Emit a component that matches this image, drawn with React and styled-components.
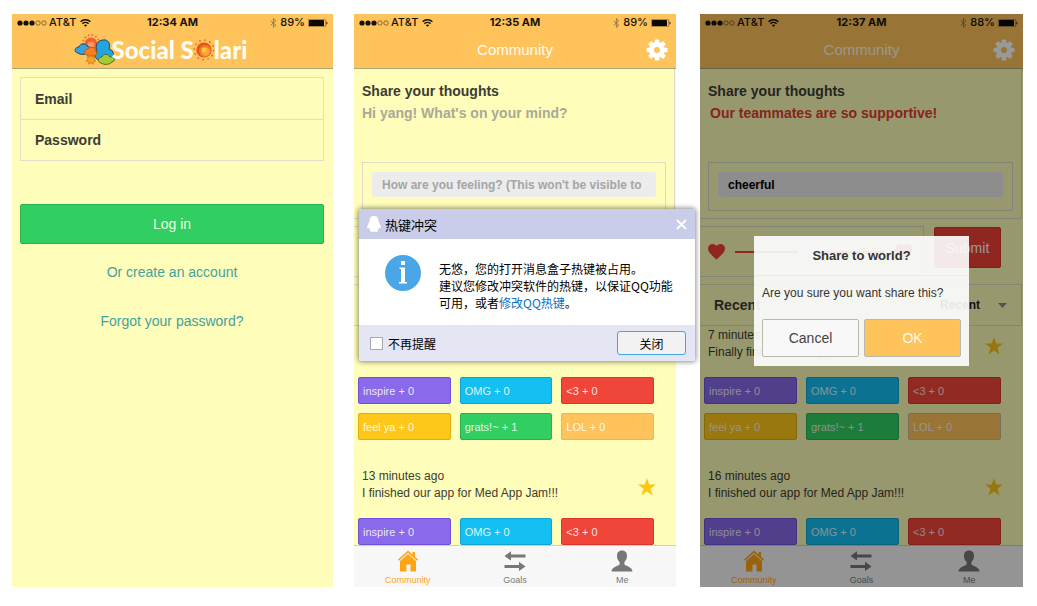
import React, { useId } from "react";
import styled, { createGlobalStyle } from "styled-components";

const GlobalStyle = createGlobalStyle`
  *, *::before, *::after { box-sizing: border-box; }
  body { margin: 0; background: #fff; font-family: "Liberation Sans", Arial, sans-serif; }
  button, input, select, textarea { font: inherit; margin: 0; }
`;

const Page = styled.main`
  display: grid;
  grid-template-columns: minmax(0, 321fr) 21px minmax(0, 322fr) 24px minmax(0, 323fr);
  padding: 14px 14px 19px 12px;
`;

const Phone = styled.section`
  position: relative;
  grid-column: ${(p) => p.$column};
  grid-row: 1;
  display: flex;
  flex-direction: column;
  min-width: 0;
  background: #fefdb9;
  color: #3c3c34;
`;

/* header */
const Header = styled.header`
  background: #fec35a;
  border-bottom: 1px solid #aaa679;
`;

const StatusBar = styled.div`
  display: grid;
  grid-template-columns: 1fr auto 1fr;
  align-items: center;
  height: 17px;
  padding: 0 5px;
  font: 500 11px/17px Inter, sans-serif;
  color: #16110a;
`;

const StatusTime = styled.span`
  font-weight: 700;
`;

const StatusGroup = styled.div`
  display: flex;
  align-items: center;
  gap: ${(p) => (p.$end ? 3 : 2)}px;
  justify-content: ${(p) => (p.$end ? "flex-end" : "flex-start")};
`;

const TitleBar = styled.div`
  display: grid;
  grid-template-columns: 38px 1fr 38px;
  align-items: center;
  height: 37px;
`;

const Title = styled.h1`
  margin: 0;
  font-size: 15px;
  line-height: 20px;
  font-weight: 400;
  text-align: center;
  color: #fffbee;
`;

const IconButton = styled.button`
  display: flex;
  justify-content: center;
  padding: 0;
  border: 0;
  background: none;
  color: #fff;
`;

const Brand = styled.h1`
  display: flex;
  align-items: center;
  justify-content: center;
  height: 37px;
  margin: 0;
  padding-right: 24px;
  font: 900 24px/30px Lato, sans-serif;
  color: #fffdf2;
`;

/* login */
const LoginForm = styled.form`
  display: flex;
  flex-direction: column;
  padding: 8px 9px 0 8px;
`;

const FieldGroup = styled.div`
  display: flex;
  flex-direction: column;
  border: 1px solid #e2dfc9;
`;

const Field = styled.input`
  height: 41px;
  padding: 0 14px;
  border: 0;
  background: transparent;
  font-size: 14px;
  font-weight: 700;
  outline: none;
  & + & { border-top: 1px solid #e2dfc9; }
  &::placeholder { color: #3c3c34; opacity: 1; }
`;

const LoginButton = styled.button`
  height: 40px;
  margin-top: 43px;
  border: 1px solid #2bb457;
  border-radius: 2px;
  background: #31cf61;
  color: #e9fbe4;
  font-size: 14px;
`;

const LoginLinks = styled.nav`
  display: flex;
  flex-direction: column;
  align-items: center;
  gap: 29px;
  padding-top: 18px;
  a { font-size: 14px; line-height: 20px; color: #43a2a0; text-decoration: none; }
`;

/* community */
const Panel = styled.div`
  border: 1px solid #dddac8;
  border-left: 0;
`;

const Composer = styled(Panel)`
  display: flex;
  flex-direction: column;
  margin-right: 1px;
  padding: 11px 8px 7px;
  border-top: 0;
`;

const ComposerLabel = styled.label`
  font-size: 14px;
  line-height: 22px;
  font-weight: 700;
`;

const Thoughts = styled.textarea`
  height: 60px;
  padding: 0;
  border: 0;
  background: transparent;
  resize: none;
  outline: none;
  font-size: 14px;
  line-height: 22px;
  font-weight: 700;
  text-indent: 2px;
  color: #e23b34;
  &::placeholder { color: #a9a998; text-indent: 0; opacity: 1; }
`;

const FeelingBox = styled.div`
  display: flex;
  padding: 9px 9px 13px;
  border: 1px solid #dddac8;
`;

const Feeling = styled.input`
  flex: 1;
  min-width: 0;
  height: 25px;
  padding: 0 10px;
  border: 0;
  border-radius: 3px;
  background: #ececec;
  color: #000;
  font-size: 12px;
  font-weight: 700;
  outline: none;
  &::placeholder { color: #a5a5a5; opacity: 1; }
`;

const ShareRow = styled.div`
  display: flex;
  gap: 10px;
  margin-top: 7px;
  padding-right: 22px;
`;

const MoodPanel = styled(Panel)`
  display: flex;
  flex: 1;
  align-items: center;
  gap: 10px;
  min-width: 0;
  height: 51px;
  padding: 0 11px 0 8px;
`;

const MoodRange = styled.input`
  flex: 1;
  min-width: 0;
  height: 26px;
  appearance: none;
  background: transparent;
  &::-webkit-slider-runnable-track { height: 2px; background: #ee4136; }
  &::-webkit-slider-thumb {
    appearance: none;
    width: 24px;
    height: 24px;
    margin-top: -11px;
    border-radius: 50%;
    background: #fff;
  }
`;

const SubmitButton = styled.button`
  width: 67px;
  height: 41px;
  margin-top: 1px;
  padding: 0;
  border: 1px solid #d9352c;
  border-radius: 2px;
  background: #ee4136;
  color: #fff;
  font-size: 14px;
`;

const SortPanel = styled(Panel)`
  display: flex;
  align-items: center;
  justify-content: space-between;
  height: 42px;
  margin: 7px 1px 0 0;
  padding: 0 14px;
`;

const SortLabel = styled.label`
  font-size: 14px;
  font-weight: 700;
`;

const SortControl = styled.div`
  display: flex;
  align-items: center;
  gap: 14px;
`;

const SortSelect = styled.select`
  appearance: none;
  width: 44px;
  padding: 0;
  border: 0;
  background: transparent;
  color: #222;
  font-size: 12px;
  font-weight: 700;
`;

const PostItem = styled.article`
  padding: 1px 22px ${(p) => (p.$last ? 0 : 27)}px 4px;
`;

const PostTop = styled.div`
  display: flex;
  align-items: center;
  justify-content: space-between;
  height: 34px;
  margin-bottom: 16px;
  padding-left: 4px;
`;

const PostText = styled.p`
  margin: 0;
  font-size: 12px;
  line-height: 17px;
  white-space: nowrap;
`;

const StarSlot = styled.span`
  display: flex;
  padding-top: 4px;
  margin: 0 -2px 0 auto;
`;

const Reactions = styled.div`
  display: grid;
  grid-template-columns: repeat(3, 1fr);
  gap: 9px;
`;

const Reaction = styled.button`
  height: 27px;
  padding: 0 4px;
  border: 1px solid ${(p) => p.$edge};
  border-radius: 2px;
  background: ${(p) => p.$fill};
  color: rgba(255, 255, 255, 0.86);
  font-size: 11px;
  text-align: left;
`;

const TabBar = styled.nav`
  display: grid;
  grid-template-columns: repeat(3, 1fr);
  height: 42px;
  margin-top: auto;
  border-top: 1px solid #cfcfc4;
  background: #f7f7f7;
`;

const Tab = styled.a`
  display: flex;
  flex-direction: column;
  align-items: center;
  gap: 2px;
  padding-top: 4px;
  font-size: 9px;
  line-height: 12px;
  text-decoration: none;
  color: ${(p) => (p.$active ? "#fea516" : "#777")};
`;

/* share confirmation */
const Shade = styled.div`
  position: absolute;
  inset: 0;
  display: flex;
  align-items: center;
  justify-content: center;
  background: rgba(0, 0, 0, 0.4);
`;

const Confirm = styled.div`
  width: 215px;
  background: rgba(255, 255, 255, 0.9);
  color: #333;
`;

const ConfirmTitle = styled.h2`
  margin: 0;
  border-bottom: 1px solid #ecece8;
  font-size: 13px;
  line-height: 39px;
  font-weight: 700;
  text-align: center;
`;

const ConfirmText = styled.p`
  margin: 0;
  padding: 8px;
  font-size: 12px;
  line-height: 18px;
`;

const ConfirmActions = styled.div`
  display: grid;
  grid-template-columns: 1fr 1fr;
  gap: 5px;
  padding: 9px 8px 9px;
`;

const ConfirmButton = styled.button`
  height: 38px;
  border: 1px solid #b9b9b4;
  border-radius: 2px;
  background: ${(p) => (p.$primary ? "#fec35a" : "#f8f8f8")};
  color: ${(p) => (p.$primary ? "#fffbee" : "#444")};
  font-size: 14px;
`;

/* hotkey window */
const Window = styled.div`
  position: absolute;
  top: 195px;
  left: 5px;
  right: -19px;
  border-radius: 3px;
  overflow: hidden;
  background: #fff;
  color: #000;
  font: 12px/17px "Noto Sans CJK SC", sans-serif;
  box-shadow: 0 0 5px 1px rgba(0, 0, 0, 0.45);
`;

const WindowTitle = styled.div`
  display: flex;
  align-items: center;
  height: 30px;
  padding: 0 8px 0 7px;
  background: #c9cde9;
  h2 { flex: 1; margin: 0 0 0 3px; font-size: 13px; font-weight: 400; }
`;

const WindowBody = styled.div`
  display: flex;
  gap: 18px;
  height: 86px;
  padding: 16px 20px 0 26px;
  p { margin: 5px 0 0; white-space: nowrap; }
  a { color: #0a70c4; text-decoration: none; }
`;

const WindowFooter = styled.div`
  display: flex;
  align-items: center;
  justify-content: space-between;
  height: 36px;
  padding: 0 9px 0 11px;
  background: #e4e6f4;
`;

const Remember = styled.label`
  display: flex;
  align-items: center;
  gap: 5px;
  input {
    appearance: none;
    width: 13px;
    height: 13px;
    border: 1px solid #a9a9ae;
    background: #fff;
  }
`;

const CloseButton = styled.button`
  width: 69px;
  height: 24px;
  padding: 0;
  border: 1px solid #45a5dc;
  border-radius: 3px;
  background: #f2f2f3;
  color: #000;
`;

/* drawings */
const SignalIcon = () => (
  <svg width="30" height="6" viewBox="0 0 30 6">
    {[3, 9, 15].map((x) => <circle key={x} cx={x} cy="3" r="2.600" fill="#16110a" />)}
    {[21, 27].map((x) => <circle key={x} cx={x} cy="3" r="2.200" fill="none" stroke="#59441f" strokeWidth=".7" />)}
  </svg>
);

const WifiIcon = () => (
  <svg width="11" height="8" viewBox="0 0 11 8" fill="none" stroke="#16110a" strokeWidth="1.4" style={{ marginLeft: 2 }}>
    <path d="M.6 2.7a7 7 0 0 1 9.800 0M2.400 4.700a4.500 4.500 0 0 1 6.200 0" />
    <path d="M5.500 7.800 3.900 6.200a2.300 2.300 0 0 1 3.200 0Z" fill="#16110a" stroke="none" />
  </svg>
);

const BluetoothIcon = () => (
  <svg width="7" height="10" viewBox="0 0 7 10" fill="none" stroke="#8d744a" strokeWidth=".9">
    <path d="m.8 2.800 5 4.400L3.400 9.400V.6l2.400 2.200-5 4.400" />
  </svg>
);

const BatteryIcon = () => (
  <svg width="20" height="8" viewBox="0 0 20 8">
    <rect x=".3" y=".3" width="17.400" height="7.400" rx="1.200" fill="none" stroke="#59441f" strokeWidth=".6" />
    <rect x="1" y="1" width="15" height="6" rx=".5" fill="#0c0905" />
    <path d="M18.500 2.500c1.300.3 1.300 2.700 0 3z" fill="#16110a" />
  </svg>
);

const GearIcon = () => (
  <svg width="22" height="22" viewBox="-11 -11 22 22" fill="currentColor">
    {[0, 45, 90, 135].map((a) => (
      <rect key={a} x="-2.300" y="-10.500" width="4.600" height="21" rx="1.200" transform={`rotate(${a})`} />
    ))}
    <circle r="7.900" />
    <circle r="3" fill="#fec35a" />
  </svg>
);

const CloudsIcon = () => (
  <svg width="42" height="31" viewBox="0 0 42 31" style={{ marginRight: -4 }}>
    <circle cx="17" cy="9" r="8" fill="none" stroke="#e8703a" strokeWidth="1.800" strokeDasharray="1.600 2.200" />
    <circle cx="17" cy="10" r="6.400" fill="#f2602f" />
    <circle cx="17" cy="11" r="3.400" fill="#f99a5d" />
    <g strokeWidth="1" stroke="#23445a">
      <path d="M4 19c-5-1-3-6 1-6 1-4 7-4 8-1 3 0 4 4 1 6-2 3-8 3-10 1Z" fill="#34a4dd" />
      <path d="M25 26c-4-1-5-5-2-8-2-6 0-12 6-12 5-1 8 4 6 9 5 1 6 8 2 10-3 2-8 3-12 1Z" fill="#23a3e0" />
      <path d="M13 21c-4-1-3-6 1-6 2-3 8-2 8 2 2 3-1 6-4 5-2 1-4 0-5-1Z" fill="#f57f20" stroke="#b4561c" />
      <path d="M27 29c-4-1-3-6 1-6 1-4 7-3 8 0 5-1 6 4 2 5-3 3-8 3-11 1Z" fill="#a5cb34" stroke="#4d7024" />
    </g>
    <path d="m17 21 1.400 2.100 2.600-.3-.7 2.400 1.700 1.900-2.500.7-.3 2.400-2.200-1.300-2.200 1.300-.3-2.400-2.500-.7 1.700-1.900-.7-2.400 2.600.3Z" fill="#f4a325" stroke="#c56d19" strokeWidth=".6" />
  </svg>
);

const SunIcon = () => (
  <svg width="22" height="24" viewBox="-11 -12 22 24" style={{ margin: "0 -1px" }}>
    <circle r="9.800" fill="none" stroke="#d9662c" strokeWidth="1.500" strokeDasharray="1.500 3.630" />
    <circle r="7.600" fill="#e9501f" />
    <circle r="6" cx="1" cy="1" fill="#f47a25" />
    <circle r="4.200" cx="1.500" cy="1.500" fill="#fba62c" />
    <circle r="2.400" cx="0" cy="0" fill="#fbc747" />
  </svg>
);

const HeartIcon = () => (
  <svg width="17" height="16" viewBox="0 0 17 16" fill="#ee4136">
    <path d="M8.500 15.600 7.200 14.400C2.800 10.400 0 7.900 0 4.700 0 2 2 0 4.600 0c1.500 0 3 .7 3.900 1.900C9.400.7 10.900 0 12.400 0 15 0 17 2 17 4.700c0 3.200-2.800 5.700-7.200 9.700Z" />
  </svg>
);

const StarIcon = () => (
  <svg width="18" height="18" viewBox="0 0 18 18" fill="#fcc716">
    <path d="m9 0 2.200 6.500H18l-5.500 4.200 2.100 6.800L9 13.400l-5.600 4.100 2.100-6.800L0 6.500h6.800Z" />
  </svg>
);

const ArrowIcon = () => (
  <svg width="9" height="5" viewBox="0 0 9 5"><path d="M0 0h9L4.500 5Z" fill="#8d8d8d" /></svg>
);

const HomeIcon = () => (
  <svg width="22" height="22" viewBox="0 0 22 22" fill="currentColor">
    <path d="M11 .5 15.500 4.500V2h2.500v4.800l3 2.700-1 1.200L11 2.700 2 10.700 1 9.500Z" />
    <path d="m11 4 8 7v10.500h-5.500v-7h-4v7H3V11Z" />
  </svg>
);

const SwapIcon = () => (
  <svg width="22" height="22" viewBox="0 0 22 22" fill="currentColor">
    <path d="M.5 6 7 1.200v3.200h14.500v3H7v3.200ZM21.500 16.500 15 11.700v3.200H.5v3H15v3.200Z" />
  </svg>
);

const PersonIcon = () => (
  <svg width="22" height="22" viewBox="0 0 22 22" fill="currentColor">
    <path d="M11 .5c3.500 0 5 2.300 5 5.500 0 2.500-1 4.700-2.600 6v2.300c1 2 7.600 2 8.100 7.200H.5c.5-5.200 7.100-5.200 8.100-7.200V12C7 10.700 6 8.500 6 6 6 2.800 7.500.5 11 .5Z" />
  </svg>
);

const PenguinIcon = () => (
  <svg width="16" height="18" viewBox="0 0 16 18" fill="#fff" stroke="#b0b4d2" strokeWidth=".5">
    <path d="M8 .5c3.500 0 5 2.500 5 5.700 0 1.200 2.300 4 2.300 6.500 0 1.500-.8 1.600-1.900.2-.3 1.500-.9 2.200-1.500 2.900 1.400 1.400-.7 1.700-3.900 1.200-3.200.5-5.300.2-3.900-1.200-.6-.7-1.200-1.400-1.500-2.900-1.100 1.400-1.900 1.300-1.900-.2C.7 10.200 3 7.400 3 6.200 3 3 4.500.5 8 .5Z" />
  </svg>
);

const CrossIcon = () => (
  <svg width="11" height="11" viewBox="0 0 11 11" stroke="#fff" strokeWidth="1.800"><path d="m1 1 9 9m0-9-9 9" /></svg>
);

const InfoIcon = () => (
  <svg width="36" height="36" viewBox="0 0 36 36">
    <circle cx="18" cy="18" r="18" fill="#4aa6e6" />
    <path d="M16 6h4v4h-4ZM14.500 12.500H20V27h2v1.500h-8V27h2V14h-1.500Z" fill="#fff" />
  </svg>
);

/* parts */
const REACTIONS = [
  ["inspire + 0", "#886aea", "#6f50dc"],
  ["OMG + 0", "#14bff2", "#12a3d2"],
  ["<3 + 0", "#f0463a", "#dd352b"],
  ["feel ya + 0", "#fdc81a", "#e0ae14"],
  ["grats!~ + 1", "#31cf61", "#28b052"],
  ["LOL + 0", "#fec35a", "#c9b99a"],
];

function Status({ time, battery }) {
  return (
    <StatusBar>
      <StatusGroup><SignalIcon /><span>AT&amp;T</span><WifiIcon /></StatusGroup>
      <StatusTime>{time}</StatusTime>
      <StatusGroup $end><BluetoothIcon /><span>{battery}</span><BatteryIcon /></StatusGroup>
    </StatusBar>
  );
}

function Post({ age, text, last }) {
  return (
    <PostItem $last={last}>
      <PostTop>
        {text && <PostText>{age}<br />{text}</PostText>}
        <StarSlot><StarIcon /></StarSlot>
      </PostTop>
      <Reactions>
        {(last ? REACTIONS.slice(0, 3) : REACTIONS).map(([label, fill, edge]) => (
          <Reaction key={label} type="button" $fill={fill} $edge={edge}>{label}</Reaction>
        ))}
      </Reactions>
    </PostItem>
  );
}

function Community({ column, time, battery, thoughts, feeling, posts, children }) {
  const id = useId();
  return (
    <Phone $column={column}>
      <Header>
        <Status time={time} battery={battery} />
        <TitleBar>
          <span />
          <Title>Community</Title>
          <IconButton type="button" aria-label="Settings"><GearIcon /></IconButton>
        </TitleBar>
      </Header>
      <Composer>
        <ComposerLabel htmlFor={`${id}-thoughts`}>Share your thoughts</ComposerLabel>
        <Thoughts id={`${id}-thoughts`} placeholder="Hi yang! What's on your mind?" defaultValue={thoughts} />
        <FeelingBox>
          <Feeling aria-label="Feeling" placeholder="How are you feeling? (This won't be visible to" defaultValue={feeling} />
        </FeelingBox>
      </Composer>
      <ShareRow>
        <MoodPanel>
          <HeartIcon />
          <MoodRange type="range" aria-label="Mood" defaultValue="50" />
          <HeartIcon />
        </MoodPanel>
        <SubmitButton type="button">Submit</SubmitButton>
      </ShareRow>
      <SortPanel>
        <SortLabel htmlFor={`${id}-sort`}>Recent</SortLabel>
        <SortControl>
          <SortSelect id={`${id}-sort`}><option>Recent</option></SortSelect>
          <ArrowIcon />
        </SortControl>
      </SortPanel>
      {posts.map((p, i) => <Post key={i} {...p} last={i === posts.length - 1} />)}
      <TabBar>
        <Tab href="#community" $active><HomeIcon />Community</Tab>
        <Tab href="#goals"><SwapIcon />Goals</Tab>
        <Tab href="#me"><PersonIcon />Me</Tab>
      </TabBar>
      {children}
    </Phone>
  );
}

function Login() {
  return (
    <Phone $column={1}>
      <Header>
        <Status time="12:34 AM" battery="89%" />
        <Brand><CloudsIcon />Social&nbsp;S<SunIcon />lari</Brand>
      </Header>
      <LoginForm>
        <FieldGroup>
          <Field type="email" aria-label="Email" placeholder="Email" />
          <Field type="password" aria-label="Password" placeholder="Password" />
        </FieldGroup>
        <LoginButton type="button">Log in</LoginButton>
        <LoginLinks>
          <a href="#create">Or create an account</a>
          <a href="#forgot">Forgot your password?</a>
        </LoginLinks>
      </LoginForm>
    </Phone>
  );
}

function HotkeyWindow() {
  return (
    <Window role="dialog" aria-label="热键冲突">
      <WindowTitle>
        <PenguinIcon />
        <h2>热键冲突</h2>
        <IconButton type="button" aria-label="关闭窗口"><CrossIcon /></IconButton>
      </WindowTitle>
      <WindowBody>
        <InfoIcon />
        <p>
          无悠，您的打开消息盒子热键被占用。<br />
          建议您修改冲突软件的热键，以保证QQ功能<br />
          可用，或者<a href="#hotkey">修改QQ热键</a>。
        </p>
      </WindowBody>
      <WindowFooter>
        <Remember><input type="checkbox" />不再提醒</Remember>
        <CloseButton type="button">关闭</CloseButton>
      </WindowFooter>
    </Window>
  );
}

function ShareConfirm() {
  return (
    <Shade>
      <Confirm role="dialog" aria-label="Share to world?">
        <ConfirmTitle>Share to world?</ConfirmTitle>
        <ConfirmText>Are you sure you want share this?</ConfirmText>
        <ConfirmActions>
          <ConfirmButton type="button">Cancel</ConfirmButton>
          <ConfirmButton type="button" $primary>OK</ConfirmButton>
        </ConfirmActions>
      </Confirm>
    </Shade>
  );
}

const FINISHED = "I finished our app for Med App Jam!!!";

export default function App() {
  return (
    <>
      <GlobalStyle />
      <Page>
        <Login />
        <Community
          column={3}
          time="12:35 AM"
          battery="89%"
          posts={[{}, { age: "13 minutes ago", text: FINISHED }]}
        >
          <HotkeyWindow />
        </Community>
        <Community
          column={5}
          time="12:37 AM"
          battery="88%"
          thoughts="Our teammates are so supportive!"
          feeling="cheerful"
          posts={[
            { age: "7 minutes ago", text: "Finally finished our app" },
            { age: "16 minutes ago", text: FINISHED },
          ]}
        >
          <ShareConfirm />
        </Community>
      </Page>
    </>
  );
}
